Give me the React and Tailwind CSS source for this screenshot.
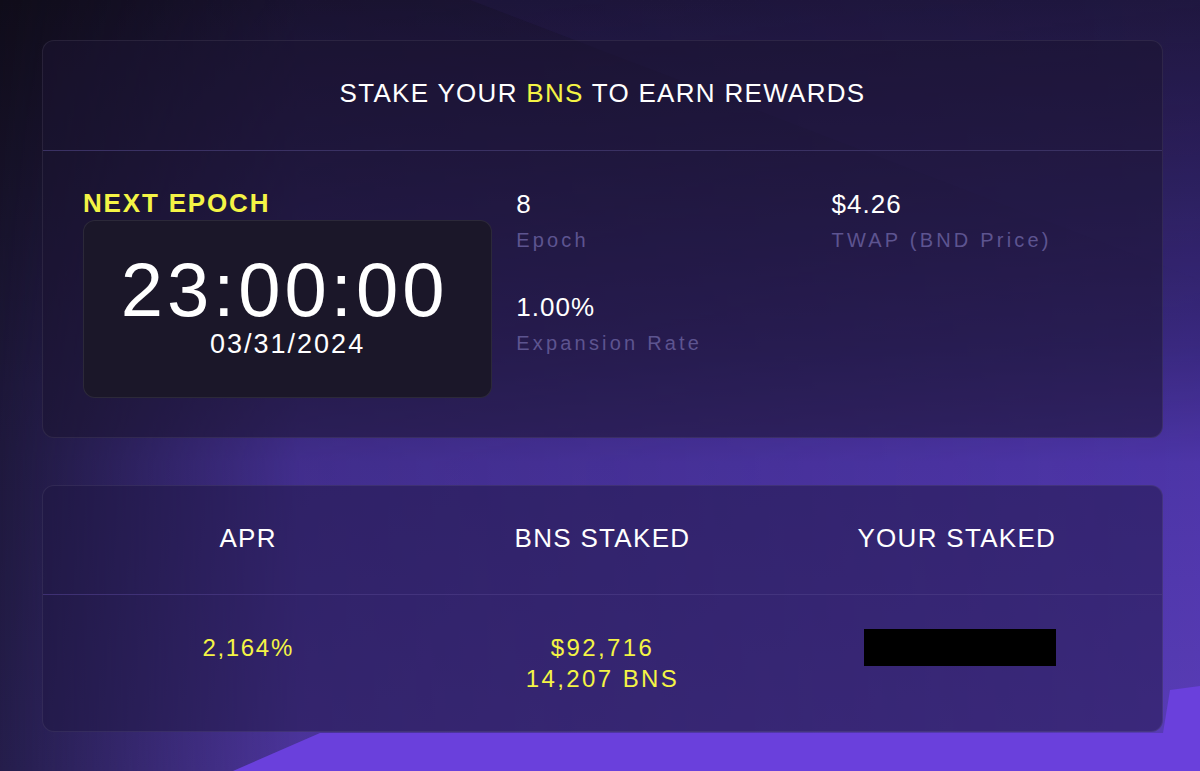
import React from 'react';

const font = { fontFamily: '"Liberation Sans", Arial, sans-serif' };

// purple backdrop drawn as one svg
function Backdrop() {
  return (
    <svg viewBox="0 0 1200 771" preserveAspectRatio="none" className="w-full h-full block">
      <defs>
        <linearGradient id="base" x1="0" y1="0" x2="0" y2="1">
          <stop offset="0" stopColor="#0f0c18" />
          <stop offset="0.5" stopColor="#1b1634" />
          <stop offset="1" stopColor="#221c46" />
        </linearGradient>
        <linearGradient id="tint" x1="0" y1="0" x2="0" y2="1">
          <stop offset="0" stopColor="#2a1e58" stopOpacity="0.5" />
          <stop offset="0.45" stopColor="#3f2c8e" stopOpacity="0.85" />
          <stop offset="0.6" stopColor="#4d35a8" stopOpacity="1" />
          <stop offset="1" stopColor="#5a3db8" stopOpacity="1" />
        </linearGradient>
        <linearGradient id="fade" x1="0" y1="0" x2="1" y2="0">
          <stop offset="0" stopColor="#fff" stopOpacity="0.05" />
          <stop offset="0.25" stopColor="#fff" stopOpacity="0.75" />
          <stop offset="1" stopColor="#fff" stopOpacity="1" />
        </linearGradient>
        <mask id="fadeMask" maskUnits="userSpaceOnUse" x="0" y="0" width="1200" height="771">
          <rect width="1200" height="771" fill="url(#fade)" />
        </mask>
      </defs>
      <rect width="1200" height="771" fill="url(#base)" />
      <rect width="1200" height="771" fill="url(#tint)" mask="url(#fadeMask)" />
      <polygon points="470,0 1200,0 1200,280" fill="#3a2a7a" opacity="0.12" />
      <polygon points="233,771 320,733 1163,733 1170,690 1200,686 1200,771" fill="#6a40dc" />
    </svg>
  );
}

function Stat({ value, label }) {
  return (
    <div className="flex flex-col">
      <div className="text-[26px] leading-[26px] text-white tracking-[0.04em]">{value}</div>
      <div className="mt-[13px] text-[20px] leading-[20px] text-[#5d5490] tracking-[0.16em]">{label}</div>
    </div>
  );
}

export default function App() {
  return (
    <div style={font} className="grid w-full h-[771px] overflow-hidden">
      <div className="[grid-area:1/1]">
        <Backdrop />
      </div>

      <div className="[grid-area:1/1] pt-[40px] pl-[42px]">
        {/* epoch card */}
        <div className="w-[1121px] rounded-[12px] border border-white/[0.07] bg-[#1c1432]/55">
          <div className="h-[110px] flex items-center justify-center border-b border-[#3a3163]">
            <h1 className="text-[26px] leading-none text-white tracking-[0.05em] pb-[6px]">
              STAKE YOUR <span className="text-[#f4f445]">BNS</span> TO EARN REWARDS
            </h1>
          </div>
          <div className="flex px-[40px] pt-[39px] pb-[39px]">
            <div className="w-[410px] flex flex-col">
              <div className="text-[26px] leading-[26px] font-bold text-[#f4f445] tracking-[0.07em]">NEXT EPOCH</div>
              <div className="mt-[4px] h-[178px] rounded-[12px] border border-white/[0.08] bg-[#1b1729] flex flex-col items-center pt-[39px]">
                <div className="text-[76px] leading-[60px] text-white tracking-[4px] pr-[6px]">23:00:00</div>
                <div className="mt-[9px] text-[27px] leading-[30px] text-white tracking-[2px]">03/31/2024</div>
              </div>
            </div>
            <div className="ml-[24px] w-[316px] flex flex-col pt-[1px]">
              <Stat value="8" label="Epoch" />
              <div className="mt-[44px]">
                <Stat value="1.00%" label="Expansion Rate" />
              </div>
            </div>
            <div className="w-[291px] flex flex-col pt-[1px]">
              <Stat value="$4.26" label="TWAP (BND Price)" />
            </div>
          </div>
        </div>

        {/* staking card */}
        <div className="mt-[47px] w-[1121px] rounded-[12px] border border-white/[0.07] bg-[#1e1641]/50">
          <div className="h-[109px] grid grid-cols-3 items-center px-[28px] border-b border-[#4a3a84]/70">
            {['APR', 'BNS STAKED', 'YOUR STAKED'].map((h) => (
              <div key={h} className="text-center text-[26px] leading-none text-white tracking-[0.05em] pb-[4px]">
                {h}
              </div>
            ))}
          </div>
          <div className="grid grid-cols-3 px-[28px] pt-[34px] pb-[37px]">
            <div className="pt-[3px] text-center text-[24px] leading-[31px] text-[#f4f445] tracking-[0.07em]">2,164%</div>
            <div className="pt-[3px] text-center text-[24px] leading-[31px] text-[#f4f445] tracking-[0.1em]">
              <div>$92,716</div>
              <div>14,207 BNS</div>
            </div>
            <div className="flex justify-center pl-[6px]">
              <div className="w-[192px] h-[37px] bg-black"></div>
            </div>
          </div>
        </div>
      </div>
    </div>
  );
}
